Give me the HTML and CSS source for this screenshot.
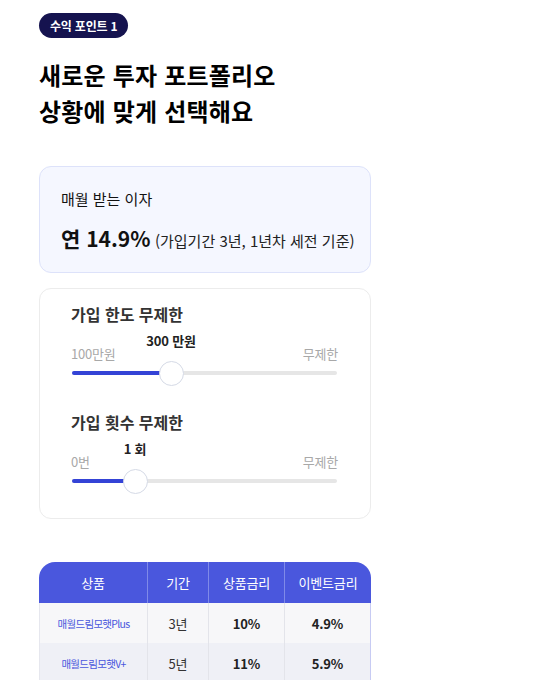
FILE: index.html
```html
<!DOCTYPE html>
<html lang="ko">
<head>
<meta charset="utf-8">
<link rel="stylesheet" href="styles.css">
</head>
<body>
<main class="page">
  <span class="badge">수익 포인트 1</span>
  <h1 class="title">새로운 투자 포트폴리오<br>상황에 맞게 선택해요</h1>

  <section class="card rate-card">
    <p class="rate-label">매월 받는 이자</p>
    <p class="rate-value"><strong>연 14.9%</strong> <span>(가입기간 3년, 1년차 세전 기준)</span></p>
  </section>

  <section class="card slider-card">
    <div class="slider-block">
      <h2 class="slider-title">가입 한도 무제한</h2>
      <div class="slider-labels">
        <span>100만원</span>
        <span class="current" style="left: 99px">300 만원</span>
        <span>무제한</span>
      </div>
      <div class="track">
        <div class="fill" style="width: 99px"></div>
        <div class="thumb" style="left: 99px"></div>
      </div>
    </div>
    <div class="slider-block second">
      <h2 class="slider-title">가입 횟수 무제한</h2>
      <div class="slider-labels">
        <span>0번</span>
        <span class="current" style="left: 63px">1 회</span>
        <span>무제한</span>
      </div>
      <div class="track">
        <div class="fill" style="width: 63px"></div>
        <div class="thumb" style="left: 63px"></div>
      </div>
    </div>
  </section>

  <table class="rates">
    <thead>
      <tr><th>상품</th><th>기간</th><th>상품금리</th><th>이벤트금리</th></tr>
    </thead>
    <tbody>
      <tr><td class="name">매월드림모햇Plus</td><td>3년</td><td class="b">10%</td><td class="b">4.9%</td></tr>
      <tr><td class="name">매월드림모햇V+</td><td>5년</td><td class="b">11%</td><td class="b">5.9%</td></tr>
    </tbody>
  </table>
</main>
</body>
</html>
```
FILE: styles.css
```css
* { box-sizing: border-box; }
html, body { margin: 0; padding: 0; background: #fff; }
body {
  font-family: "Noto Sans CJK KR", "Noto Sans", sans-serif;
  color: #111;
}
.page {
  width: 332px;
  margin-left: 39px;
  padding-top: 12px;
}
.badge {
  display: inline-block;
  height: 25px;
  line-height: 25px;
  padding: 0 11px;
  border-radius: 13px;
  background: #15134f;
  color: #fff;
  font-size: 12px;
  font-weight: 700;
  letter-spacing: -0.2px;
}
.title {
  margin: 19px 0 0;
  font-size: 24px;
  line-height: 36px;
  font-weight: 700;
  letter-spacing: 0.2px;
  color: #000;
}
.card {
  border-radius: 12px;
}
.rate-card {
  margin-top: 37px;
  height: 107px;
  background: #f5f7ff;
  border: 1px solid #dde2fa;
  padding: 22px 21px 0;
}
.rate-label {
  margin: 0;
  font-size: 15px;
  line-height: 20px;
  letter-spacing: 0;
  color: #111;
}
.rate-value {
  margin: 17px 0 0;
  line-height: 24px;
  white-space: nowrap;
}
.rate-value strong {
  font-size: 21px;
  font-weight: 700;
  letter-spacing: 0;
}
.rate-value span {
  font-size: 15px;
  letter-spacing: 0;
  color: #222;
}
.slider-card {
  margin-top: 15px;
  height: 231px;
  border: 1px solid #ececec;
  padding: 14px 32px 0 31px;
}
.slider-block.second { margin-top: 36px; }
.slider-title {
  margin: 0;
  font-size: 16px;
  line-height: 22px;
  font-weight: 700;
  color: #333;
  letter-spacing: 0;
}
.slider-labels {
  position: relative;
  display: flex;
  justify-content: space-between;
  margin-top: 20px;
  font-size: 13px;
  line-height: 18px;
  color: #a8a8a8;
  letter-spacing: -0.2px;
}
.slider-labels .current {
  position: absolute;
  top: -13px;
  transform: translateX(-50%);
  margin-left: 1px;
  color: #222;
  font-weight: 700;
  white-space: nowrap;
}
.track {
  position: relative;
  height: 4px;
  margin-top: 8px;
  margin-left: 1px;
  margin-right: 1px;
  background: #e6e6e6;
  border-radius: 2px;
}
.fill {
  height: 4px;
  background: #3443d6;
  border-radius: 2px;
}
.thumb {
  position: absolute;
  top: 50%;
  width: 25px;
  height: 25px;
  margin-left: -12px;
  margin-top: -12.5px;
  border-radius: 50%;
  background: #fff;
  border: 1px solid #d5dae6;
}
.rates {
  margin-top: 43px;
  width: 332px;
  border-collapse: separate;
  border-spacing: 0;
  font-size: 13px;
  letter-spacing: -0.2px;
}
.rates th {
  height: 41px;
  background: #4a57dd;
  color: #fff;
  font-weight: 400;
  font-size: 13px;
  border-left: 1px solid #7f8ae8;
}
.rates th:first-child { border-left: none; border-top-left-radius: 16px; width: 108px; }
.rates th:nth-child(2) { width: 61px; }
.rates th:nth-child(3) { width: 76px; }
.rates th:last-child { border-top-right-radius: 16px; }
.rates td {
  height: 40px;
  text-align: center;
  color: #333;
  border-left: 1px solid #e3e4ea;
}
.rates td:first-child { border-left: 1px solid #e6e7ee; }
.rates td:last-child { border-right: 1px solid #c7cbf3; }
.rates tbody tr:nth-child(1) td { background: #f7f7f9; }
.rates tbody tr:nth-child(2) td { background: #eff0f6; }
.rates td.name {
  color: #4a57dd;
  font-size: 10.5px;
  letter-spacing: -0.7px;
}
.rates td.b { font-weight: 700; color: #222; }
```
